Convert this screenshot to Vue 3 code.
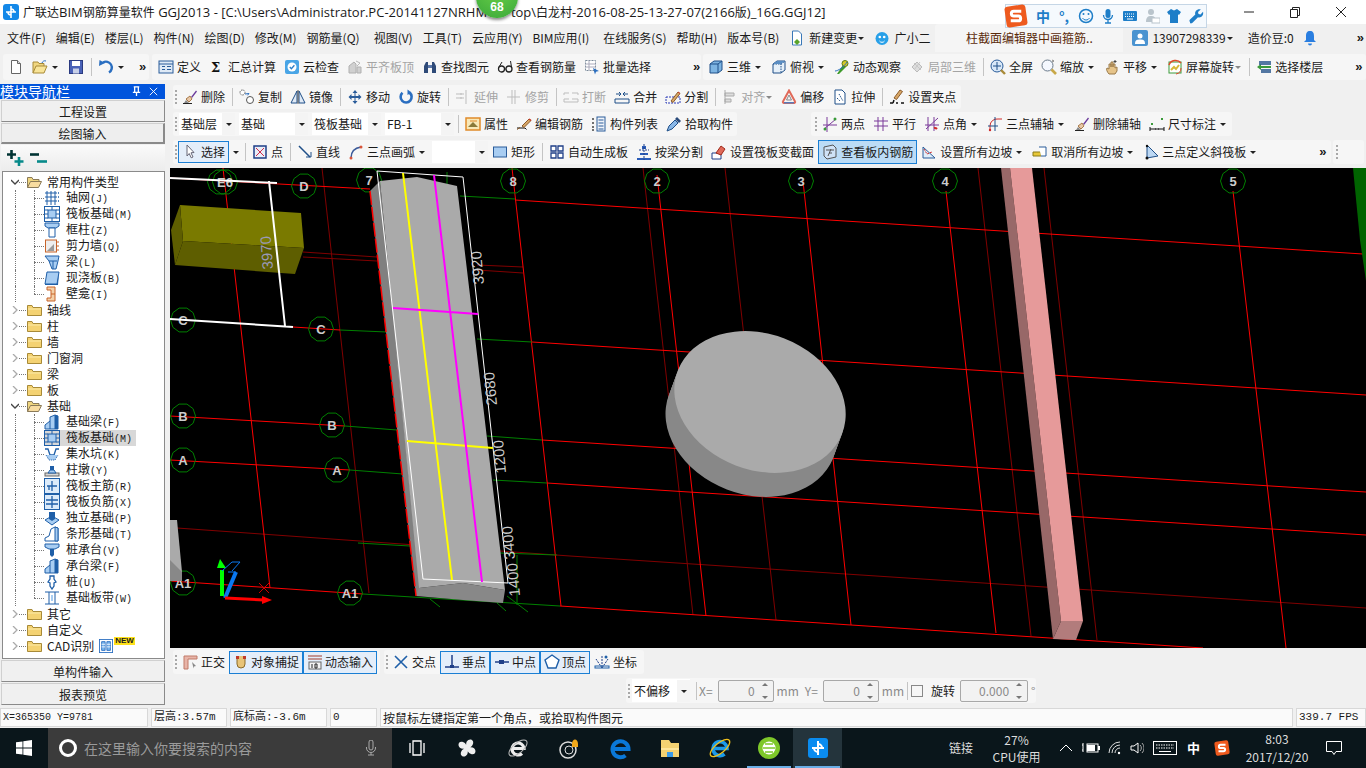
<template>
  <div class="app">
    <div class="titlebar">
      <svg class="logo" viewBox="0 0 16 16" v-html="icons.ggj"></svg>
      <span class="title-text"><span>广联达</span><span class="latin">BIM</span><span>钢筋算量软件</span><span class="latin"> GGJ2013 - [C:\Users\Administrator.PC-20141127NRHM\</span><span class="latin title-gap">top\</span><span>白龙村</span><span class="latin">-2016-08-25-13-27-07(2166</span><span>版</span><span class="latin">)_16G.GGJ12]</span></span>
      <div class="winctl">
        <svg viewBox="0 0 12 12"><path d="M1 6h10" stroke="#222" /></svg>
        <svg viewBox="0 0 12 12"><path d="M1.500 3.500h7v8h-7zM3.500 3.500v-2h7v8h-2" fill="none" stroke="#222" /></svg>
        <svg viewBox="0 0 12 12"><path d="M1 1l10 10M11 1L1 11" stroke="#222" /></svg>
      </div>
    </div>

    <div class="menubar">
      <span v-for="m in menus" :key="m" class="menu-item">{{ m }}</span>
      <svg class="icon mi-new" viewBox="0 0 16 16" v-html="icons.newchange"></svg>
      <span class="menu-label">新建变更</span><i class="caret mi-caret"></i>
      <svg class="icon mi-gxe" viewBox="0 0 16 16" v-html="icons.robot"></svg>
      <span class="menu-label mi-gxe-t">广小二</span>
      <div class="hint-tab">柱截面编辑器中画箍筋..</div>
      <svg class="icon mi-user" viewBox="0 0 16 16" v-html="icons.user"></svg>
      <span class="menu-label mi-phone">13907298339</span><i class="caret mi-caret"></i>
      <span class="menu-label mi-bean">造价豆:0</span>
      <svg class="icon mi-bell" viewBox="0 0 16 16" v-html="icons.bell"></svg>
      <span class="more mi-more">»</span>
    </div>

    <div class="toolrow toprow">
      <div v-for="(seg, si) in topRow" :key="si" class="seg" :class="seg.cls">
        <template v-for="(it, ii) in seg.items" :key="ii">
          <i v-if="it.k === 'sep'" class="sep"></i>
          <i v-else-if="it.k === 'grip'" class="grip"></i>
          <span v-else-if="it.k === 'more'" class="more">»</span>
          <div v-else class="tool" :class="{ off: it.off, box: it.box, plain: it.plain }">
            <svg class="icon" viewBox="0 0 16 16" v-html="icons[it.i]"></svg>
            <span v-if="it.label">{{ it.label }}</span>
            <i v-if="it.arrow" class="caret" :class="{ tiny: it.tiny }"></i>
          </div>
        </template>
      </div>
    </div>

    <div class="main">
      <aside class="nav">
        <div class="nav-head">
          <span>模块导航栏</span>
          <svg viewBox="0 0 12 12"><path d="M3 1h6M4 1v6M8 1v6M2 7h8M6 7v4" stroke="#fff" fill="none" stroke-width="1.400" /></svg>
          <svg viewBox="0 0 12 12"><path d="M2 2l8 8M10 2l-8 8" stroke="#fff" /></svg>
        </div>
        <div class="nav-btn">工程设置</div>
        <div class="nav-btn active">绘图输入</div>
        <div class="tree-tools">
          <svg viewBox="0 0 17 16"><path d="M4.500 0v9M0 4.500h9" stroke="#033" stroke-width="2.600" /><path d="M12 7v9M7.500 11.500h9" stroke="#078a8a" stroke-width="2.600" /></svg>
          <svg viewBox="0 0 17 16"><path d="M0 4.500h9" stroke="#033" stroke-width="2.600" /><path d="M7 11.500h10" stroke="#078a8a" stroke-width="2.600" /></svg>
        </div>
        <div class="tree">
          <div v-for="(r, i) in treeRows" :key="i" class="tree-row" :class="['lv' + r.l, { last: r.last }]">
            <template v-if="r.l === 0">
              <svg class="chev" viewBox="0 0 8 8">
                <path :d="r.open ? 'M0 2l4 4 4-4' : 'M2 0l4 4-4 4'" fill="none" :stroke="r.open ? '#444' : '#aaa'" stroke-width="1.300" />
              </svg>
              <i class="dots short"></i>
              <svg class="icon" viewBox="0 0 16 16" v-html="r.open ? icons.folderOpen : icons.folder"></svg>
              <span class="tree-label">{{ r.label }}<span v-if="r.code" class="code">{{ r.code }}</span></span>
              <template v-if="r.cad">
                <svg class="icon cad-icon" viewBox="0 0 16 16" v-html="icons.cad"></svg>
                <b class="new-tag">NEW</b>
              </template>
            </template>
            <template v-else>
              <i class="dots"></i>
              <span class="leaf" :class="{ picked: r.sel }">
                <svg class="icon" viewBox="0 0 16 16" v-html="icons[r.i]"></svg>
                <span class="tree-label">{{ r.label }}<span class="code">{{ r.code }}</span></span>
              </span>
            </template>
          </div>
        </div>
        <div class="nav-btn">单构件输入</div>
        <div class="nav-btn">报表预览</div>
      </aside>

      <section class="work">
        <div v-for="(row, ri) in workRows" :key="ri" class="toolrow" :class="'wr' + ri">
          <div v-for="(seg, si) in row" :key="si" class="seg" :class="seg.cls">
            <template v-for="(it, ii) in seg.items" :key="ii">
              <i v-if="it.k === 'sep'" class="sep"></i>
              <i v-else-if="it.k === 'grip'" class="grip"></i>
              <span v-else-if="it.k === 'more'" class="more">»</span>
              <div v-else-if="it.k === 'sel'" class="sel" :style="{ width: it.w + 'px' }">
                <span>{{ it.label }}</span><i class="caret"></i>
              </div>
              <div v-else class="tool" :class="{ off: it.off, box: it.box, hot: it.hot }">
                <svg class="icon" viewBox="0 0 16 16" v-html="icons[it.i]"></svg>
                <span>{{ it.label }}</span>
                <i v-if="it.arrow && !it.split" class="caret" :class="{ tiny: it.tiny }"></i>
              </div>
              <i v-if="it.split" class="caret solo"></i>
            </template>
          </div>
        </div>

        <svg class="canvas" viewBox="170 168 1196 480">
          <g stroke="#800000" fill="none">
            <path v-for="(d, i) in darkLines" :key="i" :d="d" />
          </g>
          <g stroke="#ff0000" fill="none">
            <path v-for="(d, i) in redLines" :key="i" :d="d" />
          </g>
          <g stroke="#008000" fill="none">
            <path v-for="(d, i) in greenLines" :key="i" :d="d" />
          </g>
          <g v-for="a in axes" :key="a.x + a.t + a.y">
            <path :d="octa(a.x, a.y)" fill="none" stroke="#008000" />
            <text class="ax" :x="a.x" :y="a.y + 5">{{ a.t }}</text>
          </g>

          <polygon points="180,205 301,213 304,248 183,241" fill="#7a7a00" />
          <polygon points="183,241 304,248 295,274 175,265" fill="#5e5e00" />
          <polygon points="180,205 183,241 175,265 171,230" fill="#5e5e00" />
          <path d="M170 178L277 183M269 181L285 326M170 319L293 327" stroke="#fff" stroke-width="2" fill="none" />
          <text class="dim faint" transform="translate(273,269) rotate(-94)">3970</text>

          <polygon points="170,520 177,520 182,572 170,581" fill="#aaa" />
          <polygon points="170,560 182,572 182,581 170,581" fill="#888" />

          <polygon points="370,191 380,181 420,590 416,596" fill="#808080" />
          <polygon points="419,588 463,583 505,590 503,603 463,600 416,596" fill="#888" />
          <polygon points="380,181 417,177 457,186 505,590 463,583 419,588" fill="#aaa" />
          <path d="M370 191L416 596" stroke="#f00" stroke-width="1.500" stroke-dasharray="14 2" fill="none" />
          <path d="M377 171L463 177L508 583L423 579Z" stroke="#fff" fill="none" />
          <path d="M403 173L452 580M407 441L493 448" stroke="#ff0" stroke-width="2" fill="none" />
          <path d="M434 175L482 582M393 308L478 314" stroke="#f0f" stroke-width="2" fill="none" />
          <text class="dim" transform="translate(484,284) rotate(-95)">3920</text>
          <text class="dim" transform="translate(497,405) rotate(-95)">2680</text>
          <text class="dim" transform="translate(506,473) rotate(-95)">1200</text>
          <text class="dim" transform="translate(515,559) rotate(-95)">3400</text>
          <text class="dim" transform="translate(520,596) rotate(-95)">1400</text>

          <ellipse v-for="s in 8" :key="s" :cx="760 - s * 1.1" :cy="402 + s * 3" rx="88" ry="68" fill="#888" :transform="'rotate(21 ' + (760 - s * 1.1) + ' ' + (402 + s * 3) + ')'" />
          <ellipse cx="760" cy="402" rx="88" ry="68" fill="#aaa" transform="rotate(21 760 402)" />

          <polygon points="1001,168 1010,168 1061,621 1053,639" fill="#986868" />
          <polygon points="1010,168 1032,168 1083,621 1061,621" fill="#e69a9a" />
          <polygon points="1061,621 1083,621 1076,640 1053,639" fill="#b27c7c" />
          <polygon points="1353,168 1366,168 1366,281 1360,240" fill="#006400" />

          <path d="M222 596L222 570" stroke="#0f0" stroke-width="4" />
          <polygon points="220,559 226,568 217,568" fill="#0f0" />
          <path d="M225 598L236 572" stroke="#0a78f0" stroke-width="4" />
          <path d="M222 571L232 562L240 562M232 571L240 562M228 572H236" stroke="#0a78f0" fill="none" />
          <path d="M225 598L264 600" stroke="#f00" stroke-width="3" />
          <polygon points="262,596 272,600 262,604" fill="#f00" />
          <path d="M259 583l10 10M269 583l-10 10" stroke="#c00" />
        </svg>

        <div class="toolrow snaprow">
          <div v-for="(seg, si) in snapRow" :key="si" class="seg" :class="seg.cls">
            <template v-for="(it, ii) in seg.items" :key="ii">
              <i v-if="it.k === 'grip'" class="grip"></i>
              <div v-else class="tool" :class="{ box: it.box }">
                <svg class="icon" viewBox="0 0 16 16" v-html="icons[it.i]"></svg>
                <span>{{ it.label }}</span>
              </div>
            </template>
          </div>
        </div>

        <div class="coordrow">
          <div class="seg coord-seg">
            <i class="grip"></i>
            <div class="sel coord-sel"><span>不偏移</span><i class="caret"></i></div>
            <i class="sep"></i>
            <span class="muted x-label">X=</span>
            <div class="spin"><span>0</span><i class="spin-btn"></i></div>
            <span class="muted">mm</span>
            <span class="muted y-label">Y=</span>
            <div class="spin"><span>0</span><i class="spin-btn"></i></div>
            <span class="muted">mm</span>
            <i class="sep"></i>
            <i class="check"></i>
            <span class="rot-label">旋转</span>
            <div class="spin wide"><span>0.000</span><i class="spin-btn"></i></div>
            <span class="muted">°</span>
          </div>
        </div>
      </section>
    </div>

    <div class="statusbar">
      <div class="cell c1">X=365350 Y=9781</div>
      <div class="cell c2">层高:3.57m</div>
      <div class="cell c3">底标高:-3.6m</div>
      <div class="cell c4">0</div>
      <div class="cell c5">按鼠标左键指定第一个角点，或拾取构件图元</div>
      <div class="cell c6">339.7 FPS</div>
    </div>

    <div class="taskbar">
      <div class="start">
        <svg viewBox="0 0 16 16"><path d="M0 2.300l6.500-.9v6.200H0zM7.300 1.300L16 0v7.600H7.300zM0 8.400h6.500v6.200L0 13.700zM7.300 8.400H16V16l-8.700-1.300z" fill="#fff" /></svg>
      </div>
      <div class="search">
        <i class="cortana"></i>
        <span class="search-text">在这里输入你要搜索的内容</span>
        <svg class="mic" viewBox="0 0 16 16"><path d="M6 2a2 2 0 014 0v6a2 2 0 01-4 0zM3.500 7v1a4.500 4.500 0 009 0V7M8 13v2M5 15h6" fill="none" stroke="#aaa" /></svg>
      </div>
      <div v-for="t in taskCells" :key="t.i" class="task" :class="{ running: t.run, focus: t.focus }" :style="{ width: t.w + 'px' }">
        <svg viewBox="0 0 24 24" v-html="icons[t.i]"></svg>
      </div>
      <div class="tray">
        <span class="t-link">链接</span>
        <div class="t-cpu"><span>27%</span><span>CPU使用</span></div>
        <svg class="t-up" viewBox="0 0 14 8"><path d="M1 7l6-6 6 6" fill="none" stroke="#fff" /></svg>
        <svg class="t-bat" viewBox="0 0 18 12"><path d="M1 3H0M1 8H0M1 1v9" stroke="#fff" /><rect x="5" y="2" width="11" height="8" fill="none" stroke="#fff" /><rect x="5" y="3" width="8" height="6" fill="#fff" /><rect x="16" y="4" width="2" height="4" fill="#fff" /></svg>
        <svg class="t-wifi" viewBox="0 0 14 14"><path d="M1 12a11 11 0 0111-11M4 12a8 8 0 018-8M7 12a5 5 0 015-5" fill="none" stroke="#ddd" /><circle cx="11" cy="12" r="1.200" fill="#fff" /></svg>
        <svg class="t-snd" viewBox="0 0 14 14"><path d="M1 5h3l4-3v10l-4-3H1z" fill="none" stroke="#fff" /><path d="M10 4a4 4 0 010 6M12 2a7 7 0 010 10" fill="none" stroke="#aaa" /></svg>
        <svg class="t-kbd" viewBox="0 0 24 14"><rect x=".5" y=".5" width="23" height="13" fill="none" stroke="#fff" /><path d="M3 4h18M3 7h18" stroke="#fff" stroke-dasharray="1.500 1" /><path d="M6 10.500h12" stroke="#fff" /></svg>
        <span class="t-zh">中</span>
        <svg class="t-s" viewBox="0 0 16 16" v-html="icons.sogou"></svg>
        <div class="t-clock"><span>8:03</span><span>2017/12/20</span></div>
        <svg class="t-note" viewBox="0 0 16 14"><path d="M.5.500h15v10h-5.500l-2 3-2-3H.5z" fill="none" stroke="#fff" /></svg>
      </div>
    </div>

    <div class="badge"><span>68</span></div>

    <div class="sogou">
      <svg class="sg-logo" viewBox="0 0 16 16" v-html="icons.sogou"></svg>
      <span class="sg-zh">中</span>
      <span class="sg-dot">°,</span>
      <svg viewBox="0 0 16 16"><circle cx="8" cy="8" r="6.500" fill="none" stroke="#1e7ec8" stroke-width="1.500" /><circle cx="5.500" cy="6" r="1" fill="#1e7ec8" /><circle cx="10.500" cy="6" r="1" fill="#1e7ec8" /><path d="M4.500 10a4 4 0 007 0" fill="none" stroke="#1e7ec8" /></svg>
      <svg viewBox="0 0 16 16"><rect x="5.500" y="1" width="5" height="9" rx="2.500" fill="#1e7ec8" /><path d="M3.500 7a4.500 4.500 0 009 0M8 12v3M5 15h6" fill="none" stroke="#1e7ec8" stroke-width="1.300" /></svg>
      <svg viewBox="0 0 16 16"><rect x="1" y="3" width="14" height="10" rx="1" fill="#1e7ec8" /><path d="M3 6h10M3 8.500h10" stroke="#fff" stroke-dasharray="1 1" /><path d="M5 11h6" stroke="#fff" /></svg>
      <svg viewBox="0 0 16 16"><circle cx="7" cy="4" r="3" fill="#b9c4cc" /><path d="M2 14c0-5 2-6 5-6s5 1 5 6z" fill="#b9c4cc" /><rect x="8" y="10" width="8" height="5" fill="#fff" stroke="#b9c4cc" /></svg>
      <svg viewBox="0 0 16 16"><path d="M5 1l3 1.500L11 1l4 3-2 3-1-.7V15H4V6.300L3 7 1 4z" fill="#1e7ec8" /></svg>
      <svg viewBox="0 0 16 16"><path d="M2 14c-1-1-.5-2 .3-2.700l5-4.800c-1-3 2-6 5.500-5L10 4l.5 2 2 .5 2.500-2.700c1 3.500-2 6.500-5 5.500l-5 5c-.8.800-2 1.600-3 .7z" fill="#1e7ec8" /></svg>
    </div>
  </div>
</template>

<script setup>
const sep = { k: 'sep' }
const grip = { k: 'grip' }
const more = { k: 'more' }
const t = (i, label, opts = {}) => ({ i, label, ...opts })
const off = { off: true }
const arrow = { arrow: true }

const menus = ['文件(F)', '编辑(E)', '楼层(L)', '构件(N)', '绘图(D)', '修改(M)', '钢筋量(Q)', '视图(V)', '工具(T)', '云应用(Y)', 'BIM应用(I)', '在线服务(S)', '帮助(H)', '版本号(B)']

const topRow = [
  { cls: 's-file', items: [t('new', ''), t('open', '', arrow), t('save', ''), sep, t('undo', '', arrow), more] },
  {
    cls: 's-main',
    items: [t('define', '定义'), t('sigma', '汇总计算'), t('cloud', '云检查'), t('flush', '平齐板顶', off), t('binoc', '查找图元'), t('glasses', '查看钢筋量'), t('batch', '批量选择'), more]
  },
  {
    cls: 's-view',
    items: [
      t('cube', '三维', arrow), t('topview', '俯视', arrow), t('orbit', '动态观察'), t('local3d', '局部三维', off), sep,
      t('fit', '全屏'), t('zoom', '缩放', arrow), t('pan', '平移', arrow), t('rotview', '屏幕旋转', { arrow: true, tiny: true }), sep, t('floors', '选择楼层'), more
    ]
  }
]

const workRows = [
  [
    {
      cls: 's-a',
      items: [
        grip, t('brush', '删除'), sep, t('copy', '复制'), t('mirror', '镜像'), sep, t('move', '移动'), t('rotate', '旋转'), sep,
        t('extend', '延伸', off), t('trim', '修剪', off), sep, t('breakg', '打断', off), t('merge', '合并'), t('split', '分割'), sep,
        t('align', '对齐', { off: true, arrow: true, tiny: true }), t('offset', '偏移'), t('stretch', '拉伸'), sep, t('grippt', '设置夹点')
      ]
    }
  ],
  [
    {
      cls: 's-b',
      items: [
        grip, { k: 'sel', label: '基础层', w: 56 }, { k: 'sel', label: '基础', w: 69 }, { k: 'sel', label: '筏板基础', w: 69 }, { k: 'sel', label: 'FB-1', w: 69 }, sep,
        t('props', '属性'), t('editbar', '编辑钢筋'), t('list', '构件列表'), t('pick', '拾取构件')
      ]
    },
    {
      cls: 's-b2',
      items: [grip, t('twopt', '两点'), t('parallel', '平行'), t('angle', '点角', arrow), t('arc3', '三点辅轴', arrow), t('brush', '删除辅轴'), t('dimen', '尺寸标注', arrow)]
    }
  ],
  [
    {
      cls: 's-c',
      items: [
        grip, t('cursor', '选择', { box: true, arrow: true, split: true }), sep, t('point', '点'), sep, t('line', '直线'), t('arc', '三点画弧', arrow),
        { k: 'sel', label: '', w: 56 }, t('rect', '矩形'), sep, t('autogen', '自动生成板'), t('beamsplit', '按梁分割'), t('varsec', '设置筏板变截面'),
        t('viewbar', '查看板内钢筋', { hot: true }), t('slope', '设置所有边坡', arrow), t('noslope', '取消所有边坡', arrow), t('tilt', '三点定义斜筏板', arrow), more
      ]
    },
    { cls: 's-c2', items: [grip] }
  ]
]

const snapRow = [
  {
    cls: 's-snap1',
    items: [grip, t('ortho', '正交'), t('osnap', '对象捕捉', { box: true }), t('dyn', '动态输入', { box: true })]
  },
  {
    cls: 's-snap2',
    items: [grip, t('cross', '交点'), t('perp', '垂点', { box: true }), t('mid', '中点', { box: true }), t('vert', '顶点', { box: true }), t('ucs', '坐标')]
  }
]

const f = (label, extra = {}) => ({ l: 0, label, ...extra })
const c = (i, label, code, extra = {}) => ({ l: 1, i, label, code, ...extra })
const treeRows = [
  f('常用构件类型', { open: true }),
  c('grid', '轴网', '(J)'),
  c('raft', '筏板基础', '(M)'),
  c('column', '框柱', '(Z)'),
  c('shear', '剪力墙', '(Q)'),
  c('beam', '梁', '(L)'),
  c('slab', '现浇板', '(B)'),
  c('niche', '壁龛', '(I)', { last: true }),
  f('轴线'), f('柱'), f('墙'), f('门窗洞'), f('梁'), f('板'),
  f('基础', { open: true }),
  c('fbeam', '基础梁', '(F)'),
  c('raft', '筏板基础', '(M)', { sel: true }),
  c('pit', '集水坑', '(K)'),
  c('pier', '柱墩', '(Y)'),
  c('mainbar', '筏板主筋', '(R)'),
  c('negbar', '筏板负筋', '(X)'),
  c('isolated', '独立基础', '(P)'),
  c('fstrip', '条形基础', '(T)'),
  c('pilecap', '桩承台', '(V)'),
  c('fbeam', '承台梁', '(F)'),
  c('pile', '桩', '(U)'),
  c('band', '基础板带', '(W)', { last: true }),
  f('其它'), f('自定义'), f('CAD识别', { cad: true })
]

const redLines = [
  'M515 200L1363 254', 'M532 342L1366 395', 'M542 440L1366 492', 'M547 483L1366 535', 'M560 606L1203 648',
  'M170 178L370 189', 'M293 327L340 330', 'M170 416L345 426', 'M170 460L350 470', 'M170 581L363 594',
  'M657 175L706 616', 'M803 181L851 625', 'M946 191L996 633', 'M1233 191L1286 648',
  'M512 168L561 606', 'M223 168L270 588'
]
const darkLines = [
  'M177 528L570 556L1366 608', 'M643 168L693 615', 'M725 168L776 620', 'M978 168L1031 636', 'M1044 168L1097 640',
  'M322 168L369 593', 'M303 252L377 257', 'M303 257L377 261', 'M477 265L523 267', 'M477 270L523 273'
]
const greenLines = [
  'M460 196L515 199', 'M477 339L532 342', 'M340 330L387 332', 'M487 436L542 440', 'M493 480L547 483', 'M345 426L397 430', 'M350 470L403 474',
  'M358 543L410 546', 'M500 553L557 555', 'M363 594L560 606', 'M430 599L440 607', 'M497 603L506 611', 'M507 596L528 612', 'M517 555V605', 'M447 172V184'
]
const axes = [
  { x: 220, y: 182, t: '' }, { x: 225, y: 182, t: 'E6' }, { x: 304, y: 186, t: 'D' }, { x: 369, y: 180, t: '7' }, { x: 513, y: 181, t: '8' },
  { x: 183, y: 320, t: 'C' }, { x: 321, y: 329, t: 'C' }, { x: 183, y: 416, t: 'B' }, { x: 332, y: 425, t: 'B' },
  { x: 183, y: 460, t: 'A' }, { x: 337, y: 470, t: 'A' }, { x: 183, y: 583, t: 'A1' }, { x: 350, y: 593, t: 'A1' },
  { x: 657, y: 181, t: '2' }, { x: 801, y: 181, t: '3' }, { x: 945, y: 181, t: '4' }, { x: 1233, y: 181, t: '5' }
]
function octa(x, y) {
  const pts = []
  for (let i = 0; i < 10; i++) {
    const a = (Math.PI * 2 * i) / 10
    pts.push((x + Math.cos(a) * 12.5).toFixed(1) + ' ' + (y + Math.sin(a) * 12.5).toFixed(1))
  }
  return 'M' + pts.join('L') + 'Z'
}

const taskCells = [
  { i: 'taskview', w: 49 }, { i: 'fan', w: 51 }, { i: 'ieWhite', w: 52 }, { i: 'swirl', w: 52 }, { i: 'edge', w: 50 },
  { i: 'explorer', w: 48 }, { i: 'ie', w: 51 }, { i: 'greenE', w: 48, run: true }, { i: 'ggjBig', w: 49, run: true, focus: true }
]

const B = '#1f5fa8'
const L = '#a8cdf2'
const O = '#c8642a'
const icons = {
  ggj: `<rect width="16" height="16" rx="3" fill="#1388e8"/><path d="M8 2v12M3 8h10M8 5a3 3 0 013 3M8 11a3 3 0 01-3-3" fill="none" stroke="#fff" stroke-width="1.600"/>`,
  ggjBig: `<rect x="2" y="2" width="20" height="20" rx="3" fill="#0a8cf0"/><path d="M12 5v14M6 12h12M12 8a4 4 0 014 4M12 16a4 4 0 01-4-4" fill="none" stroke="#fff" stroke-width="2"/>`,
  sogou: `<rect x="1" y="1" width="14" height="14" rx="2" fill="#ee5a1e" transform="rotate(-8 8 8)"/><path d="M11.500 4.800H6.500a1.500 1.500 0 000 3.200h3a1.500 1.500 0 010 3.200H4.500" fill="none" stroke="#fff" stroke-width="2"/>`,
  newchange: `<path d="M3.500 1h6l3 3v11h-9z" fill="#fff" stroke="#3a78b8"/><path d="M8 9l3 3-3 3-3-3z" fill="#5aa32a"/>`,
  robot: `<ellipse cx="8" cy="8.500" rx="6.500" ry="6.500" fill="#28a0e8"/><circle cx="5.800" cy="7" r="1.300" fill="#fff"/><circle cx="10.200" cy="7" r="1.300" fill="#fff"/><path d="M5.500 11a3 3 0 005 0" stroke="#fff" fill="none"/>`,
  user: `<rect width="16" height="16" rx="2" fill="#4a93d0"/><circle cx="8" cy="6" r="2.500" fill="#fff"/><path d="M3 14c0-4 2-4.500 5-4.500s5 .5 5 4.500z" fill="#fff"/>`,
  bell: `<path d="M8 1c3 0 4 2 4 5v4l2 2H2l2-2V6c0-3 1-5 4-5z" fill="#2a7ee0"/><path d="M6 13.500a2 2 0 004 0z" fill="#2a7ee0"/>`,
  new: `<path d="M3.500 1.500h6l3 3v10h-9z" fill="#fff" stroke="#666"/><path d="M9.500 1.500v3h3" fill="#ddd" stroke="#666"/>`,
  open: `<path d="M1 14V3h5l1 1.500h5V7" fill="#f0d680" stroke="#a88a38"/><path d="M1 14l3-7h11l-3 7z" fill="#f8e498" stroke="#a88a38"/><path d="M10 4a3 3 0 014-2" fill="none" stroke="#2a6ec0"/>`,
  save: `<rect x="1.500" y="1.500" width="13" height="13" fill="#4a62b8" stroke="#2a3a80"/><rect x="4" y="2" width="8" height="5" fill="#fff"/><rect x="5" y="9.500" width="6" height="5" fill="#c8d0e8"/>`,
  undo: `<path d="M5 3.500a5 5 0 116 10" fill="none" stroke="#2a6ec0" stroke-width="2.400"/><path d="M1 7l.5-6 5.500 3z" fill="#2a6ec0"/>`,
  define: `<rect x="1" y="2" width="14" height="12" fill="#dfeaf6" stroke="#2a5c9a"/><path d="M1 5h14M4 7.500h3M4 10.500h3M9 7.500h4M9 10.500h4" stroke="#2a5c9a"/>`,
  sigma: `<text x="2" y="13" font-size="13" font-weight="700" font-family="DejaVu Serif" fill="#111">Σ</text>`,
  cloud: `<rect x="1" y="1" width="14" height="14" rx="2" fill="#49a5e6"/><circle cx="8" cy="8" r="4.500" fill="#fff"/><path d="M5.800 8l1.600 1.700 3-3.400" fill="none" stroke="#2a7ec8" stroke-width="1.300"/>`,
  flush: `<path d="M2 14V7l5-4 2 2v9zM10 14V8h4v6z" fill="#d0d0d0" stroke="#b0b0b0"/><path d="M9 2l4 2-3 3" fill="none" stroke="#bbb"/>`,
  binoc: `<path d="M2 14V7l2-4h2v11zM14 14V7l-2-4h-2v11z" fill="#2e4a78"/><rect x="6" y="6" width="4" height="3" fill="#5a76a8"/>`,
  glasses: `<circle cx="4.500" cy="10" r="3" fill="none" stroke="#222" stroke-width="1.300"/><circle cx="12" cy="10" r="3" fill="none" stroke="#222" stroke-width="1.300"/><path d="M7.500 10h1.500M2 8l3-5M14.500 8l-1-6" stroke="#222" fill="none"/>`,
  batch: `<rect x="1.500" y="1.500" width="10" height="10" fill="#fff" stroke="#7a8a9a" stroke-dasharray="2 1"/><path d="M1.500 5h10M1.500 8h10M5 1.500v10" stroke="#aab"/><path d="M9 9l6 3-3 .8-1 2.700z" fill="#2a6ec0"/>`,
  cube: `<path d="M2 5l4-3h8v9l-4 3H2z" fill="#7db4e2" stroke="#1f4f88"/><path d="M2 5h8v9M10 5l4-3" fill="none" stroke="#1f4f88"/>`,
  topview: `<path d="M2 5l4-3h8v9l-4 3H2z" fill="#e6f0f9" stroke="#1f4f88"/><path d="M2 5h8v9M10 5l4-3" fill="none" stroke="#1f4f88" stroke-dasharray="1.500 1"/><path d="M2 5l4-3h8l-4 3z" fill="#5a8ec4"/>`,
  orbit: `<path d="M3 15l6-9 3 2-7 7z" fill="#3e9a2a"/><circle cx="11" cy="4.500" r="3" fill="#d8c828" stroke="#5a7a18"/><path d="M1 12c3 0 9-4 12-9" stroke="#2a6ec0" fill="none"/>`,
  local3d: `<path d="M3 8l5-5 5 5-5 5z" fill="#ddd" stroke="#bbb"/><path d="M5 4l7 7M11 3l-6 8" stroke="#c8c8c8"/>`,
  fit: `<circle cx="7" cy="7" r="6" fill="#d8e8f8" stroke="#2a5c9a"/><path d="M7 3v8M3 7h8" stroke="#1f4f88"/><path d="M11 11l4 4" stroke="#a88a38" stroke-width="2.400"/>`,
  zoom: `<circle cx="6.500" cy="6.500" r="5.500" fill="#f4f8ff" stroke="#6a7a8a"/><path d="M10.500 10.500l4.500 4.500" stroke="#c8a848" stroke-width="2.600"/><path d="M11 1l2 1-2 1" fill="none" stroke="#888"/>`,
  pan: `<path d="M5 15c-2-2-3-5-2-6l2 1V5h2v3V3h2v5-3h2v4l2-1v4l-2 3z" fill="#e6c48a" stroke="#9a7a4a"/><path d="M11 1v3M9.500 2.500h3" stroke="#444"/>`,
  rotview: `<rect x="2" y="3" width="12" height="11" fill="#fff" stroke="#3a9a3a"/><path d="M4 11l3-3 2 2 3-4" fill="none" stroke="#d8b838" stroke-width="2"/><path d="M2 6a7 7 0 0112-2" fill="none" stroke="#e04a2a" stroke-width="1.500"/><path d="M14 9a6 6 0 01-5 6" fill="none" stroke="#e04a2a"/>`,
  floors: `<path d="M1 8l4-3v2h10v2H5v2z" fill="#3a9a3a"/><path d="M3 3h12M3 5h12M5 11h10M5 13h10" stroke="#1f4f88" stroke-width="1.300"/>`,
  brush: `<path d="M9 8l5-6.500 1 1L10 9z" fill="#6a3a9a"/><path d="M4 10l4-3 2 3-3 3z" fill="#e8c8a8" stroke="#a87a4a"/><path d="M1 14.500h9" stroke="#222"/><path d="M4 11l-2 3h5z" fill="#888"/>`,
  copy: `<circle cx="3.500" cy="3.500" r="2.500" fill="#fff" stroke="#555" stroke-dasharray="1.500 1"/><circle cx="11" cy="11" r="3.500" fill="#fff" stroke="#555"/><path d="M6 5l4-.5M10 4.500l-1.500 1.800" stroke="#2a6ec0" fill="none"/>`,
  mirror: `<path d="M7 2L1 14h6zM9 2l6 12H9z" fill="#e0eaf6" stroke="#1f4f88"/><path d="M8 1v14" stroke="#555"/>`,
  move: `<path d="M8 1l2.500 3h-2v3h3V5l3 3-3 3V9h-3v3h2L8 15l-2.500-3h2V9h-3v2l-3-3 3-3v2h3V4h-2z" fill="#2a5c9a"/>`,
  rotate: `<path d="M4.500 3.800a5.500 5.500 0 107-.2" fill="none" stroke="#2a6ec0" stroke-width="2.600"/><path d="M9.500 6V.500l4 3z" fill="#2a6ec0"/>`,
  extend: `<path d="M1 5h8M1 9h8M11 1v14M5 5h2M5 9h2" stroke="#bdbdbd" fill="none"/>`,
  trim: `<path d="M1 8h13M6 1v14M9 1v14" stroke="#bdbdbd" fill="none"/>`,
  breakg: `<path d="M1 4h5M9 4h6M1 10h5M9 10h6M1 4v2M15 4v2M1 10v3M15 10v3h-14" stroke="#bdbdbd" fill="none"/>`,
  merge: `<path d="M1 10h14v4H1z" fill="none" stroke="#1f4f88"/><path d="M2 5h5M14 5H9M5 3l2 2-2 2M11 3L9 5l2 2" stroke="#1f4f88" fill="none"/>`,
  split: `<path d="M1 8h14v6H1z" fill="none" stroke="#2a3ab8" stroke-dasharray="2 1"/><path d="M6 12l7-9 2 1.500-7 9z" fill="#d8a868" stroke="#8a5a2a"/><path d="M13 3l2 1.500" stroke="#d03a2a"/>`,
  align: `<path d="M3 1v14M3 4h9v3H3zM3 10h6v3H3z" fill="#ddd" stroke="#aaa"/>`,
  offset: `<path d="M8 1.500l6 11a1 1 0 01-1 1.500H3a1 1 0 01-1-1.500z" fill="none" stroke="#e06a5a" stroke-width="2"/><path d="M8 6l2.500 5h-5z" fill="none" stroke="#888"/><rect x="3" y="13" width="10" height="1.500" fill="#5a7ab8"/>`,
  stretch: `<path d="M3 1h7l3 3v11H3z" fill="#fff" stroke="#1f4f88"/><path d="M5 9l3 3M7 5l4 7" stroke="#1f4f88" stroke-dasharray="1.500 1"/>`,
  grippt: `<path d="M5 9l6-8 2.500 1.500-6 8z" fill="#d8a868" stroke="#8a5a2a"/><path d="M1 14h3M7 14h2M12 14h3M5 11l-1 3" stroke="#111" stroke-width="1.500"/>`,
  props: `<rect x="1" y="2" width="14" height="12" fill="#f8e8b8" stroke="#e08a2a" stroke-width="1.500"/><path d="M3 11l5-5 5 5z" fill="#8a7a3a"/><path d="M5 5h7" stroke="#e08a2a"/>`,
  editbar: `<path d="M1 12h8l1.500 1.500" stroke="#111" fill="none"/><path d="M1 13.500l3-2M6 10l7-7 2 1.500-7 7z" fill="#d8a868" stroke="#8a5a2a"/><path d="M13 3l2 1.500" stroke="#d03a2a" stroke-width="1.500"/>`,
  list: `<rect x="6" y="1" width="8" height="14" fill="#f0f4fa" stroke="#2a5c9a"/><path d="M7.500 4h5M7.500 7h5M7.500 10h5M7.500 13h5" stroke="#2a5c9a"/><path d="M1 3h2M1 7h2M1 11h2M1 14h2" stroke="#444" stroke-width="1.500"/>`,
  pick: `<path d="M1 15l2-5 6-6 3 3-6 6z" fill="#8ab8e8" stroke="#1f4f88"/><path d="M9 3l2-2 4 4-2 2z" fill="#2a4a7a"/>`,
  twopt: `<path d="M2 13L14 3M5 1v15M1 9h14" stroke="#7a3a9a" fill="none"/><circle cx="3" cy="13" r="1.500" fill="#3a9a3a"/><circle cx="13" cy="3" r="1.500" fill="#3a9a3a"/>`,
  parallel: `<path d="M1 5h14M1 10h14M5 1v14M10 1v14" stroke="#7a3a9a" fill="none"/>`,
  angle: `<path d="M2 13L14 2M4 1v14M10 1v14M1 9h14" stroke="#7a3a9a" fill="none"/><path d="M10 12a3 3 0 013 1" stroke="#d02a2a" stroke-width="2" fill="none"/>`,
  arc3: `<path d="M3 15V10a7 7 0 018-7h4" stroke="#d02a2a" fill="none"/><path d="M8 1v14M1 10h10" stroke="#1f4f88" fill="none"/><circle cx="3" cy="14" r="1.200" fill="#d02a2a"/>`,
  dimen: `<path d="M1 13h14M1 11v4M15 11v4" stroke="#111" fill="none"/><rect x="2" y="7" width="2" height="2" fill="#3a9a3a"/><rect x="12" y="2" width="2" height="2" fill="#3a9a3a"/><path d="M6 13h1M9 13h1" stroke="#111"/>`,
  cursor: `<path d="M5 1l7 7.500-3 .3 2 4.200-1.800.8-2-4.300L5 12z" fill="#fff" stroke="#667"/>`,
  point: `<rect x="2" y="2" width="12" height="12" fill="#e8eef8" stroke="#1f3f88" stroke-width="1.500"/><path d="M4 4l8 8M12 4l-8 8" stroke="#d02a4a"/>`,
  line: `<path d="M2 2l11 11" stroke="#1f4f88" stroke-width="1.500"/><path d="M9 13h5V8" fill="none" stroke="#1f4f88"/>`,
  arc: `<path d="M3 14C3 8 6 4 13 3" fill="none" stroke="#3a5a9a" stroke-width="1.500"/><circle cx="3" cy="14" r="1.500" fill="#d8553a"/><circle cx="13" cy="3" r="1.500" fill="#d8553a"/>`,
  rect: `<rect x="1.500" y="3" width="13" height="10" fill="#a8cdf2" stroke="#2a5c9a"/>`,
  autogen: `<path d="M2 2h5v5H2zM9 2h5v5H9zM2 9h5v5H2zM9 9h5v5H9z" fill="#fff" stroke="#1f3f88" stroke-width="1.300"/>`,
  beamsplit: `<path d="M1 14h14v2H1zM4 9h8v2H4zM6 2h4v3H6z" fill="#2a5cb8"/><path d="M8 0v16M3 6h10" stroke="#1f3f88" stroke-dasharray="2 1"/>`,
  varsec: `<path d="M1 9h9v6H1z" fill="#fff" stroke="#1f3f88"/><path d="M5 9l5-7 4 3-4 6z" fill="#e06a5a" stroke="#a02a1a"/>`,
  viewbar: `<path d="M2 3l9-2 3 3v9l-9 2-3-3z" fill="#cfe2f6" stroke="#555"/><path d="M4 6h8M9 5L6 12M7 9h3" stroke="#555" fill="none"/>`,
  slope: `<path d="M2 14V3l12 11z" fill="#e0eefa" stroke="#2a5c9a"/><path d="M3 5l3 5 5-2" fill="none" stroke="#d02a2a" stroke-dasharray="2 1"/>`,
  noslope: `<path d="M1 8h8v4H1z" fill="#e8c838" stroke="#8a7a18"/><path d="M7 3h7v9H9" fill="#fff" stroke="#2a5c9a"/>`,
  tilt: `<path d="M4 1v13l11-2z" fill="#bcd8f4" stroke="#1f4f88"/><circle cx="4" cy="14" r="1.500" fill="#111"/><circle cx="4" cy="2" r="1.200" fill="#111"/>`,
  ortho: `<path d="M2 2h13v3H6v10H2z" fill="#e8b4a8" stroke="#c07a68"/><path d="M10 8l4 4-2 .4-.4 2z" fill="#888"/>`,
  osnap: `<path d="M4 2v8a4 4 0 008 0V2" fill="#e8c478" stroke="#8a6a2a"/><path d="M3 2h3v3H3zM10 2h3v3h-3z" fill="#c03a2a"/>`,
  dyn: `<path d="M1 2h14M1 5h14" stroke="#a03a2a"/><rect x="2" y="8" width="12" height="7" fill="#f4f4f4" stroke="#666"/><path d="M5 10v4M8 10v4h2v-4z" stroke="#222" fill="none"/>`,
  cross: `<path d="M2 2l12 12M14 2L2 14" stroke="#1f5fa8" stroke-width="1.600"/>`,
  perp: `<path d="M1 13h14M8 1v10" stroke="#1f3f88" stroke-width="1.500"/><rect x="6" y="11" width="4" height="3" fill="#1f3f88"/>`,
  mid: `<path d="M1 8h14" stroke="#1f3f88" stroke-width="1.500"/><rect x="5" y="6" width="5" height="4" fill="#1f3f88"/>`,
  vert: `<path d="M8 1l7 5-3 8H4L1 6z" fill="#fff" stroke="#1f5fa8" stroke-width="1.400"/>`,
  ucs: `<path d="M8 2v12M8 14L2 5M8 14l6-9" stroke="#1f3f88" stroke-dasharray="2 1" fill="none"/><rect x="1" y="12" width="14" height="2" fill="none" stroke="#1f5fa8"/><circle cx="12" cy="3" r="1.500" fill="#1f5fa8"/>`,
  folder: `<path d="M1.500 13.500V3.500h4.500l1 2h8.500v8z" fill="#f4d272" stroke="#a88a38"/><path d="M2 7h13" stroke="#fbeaa8"/>`,
  folderOpen: `<path d="M1.500 13.500V3.500h4.500l1 2h6v2" fill="#f0d680" stroke="#8a7a58"/><path d="M1.500 13.500l3-6h11l-3 6z" fill="#f8dca0" stroke="#8a7a58"/>`,
  cad: `<rect x=".5" y=".5" width="15" height="15" fill="#fff" stroke="#2a6ec0"/><path d="M3 3h4v10H3zM9 3h4v10H9z" fill="#7ab4ec" stroke="#2a6ec0"/><path d="M3 6h4M3 9h4M9 6h4M9 9h4" stroke="#fff"/>`,
  grid: `<path d="M1 3h12M1 7h12M1 11h12M3 1v14M7 1v14M11 1v14" stroke="${B}" fill="none"/><path d="M14 3h1M14 7h1M14 11h1" stroke="${B}" stroke-width="1.500"/>`,
  raft: `<rect x=".5" y=".5" width="15" height="15" fill="none" stroke="${B}"/><rect x="4" y="4" width="8" height="8" fill="${L}" stroke="${B}"/><path d="M1 4h3M1 8h3M1 12h3M12 4h3M12 8h3M12 12h3M8 1v3M8 12v3" stroke="${B}"/>`,
  column: `<path d="M1 1h14v3l-3 2H4L1 4z" fill="${L}" stroke="${B}"/><path d="M5 6h6v9H5z" fill="#fff" stroke="${B}"/>`,
  shear: `<rect x="1.500" y="2" width="11" height="12" fill="#eee" stroke="${O}"/><path d="M3 13l7-7v7z" fill="#999"/><path d="M13 4h2M13 8h2M13 12h2" stroke="${O}"/>`,
  beam: `<path d="M1 2h14l-1 5-2 8H8L5 7z" fill="${L}" stroke="${B}"/><path d="M5 7h8M9 7v8" stroke="${B}"/>`,
  slab: `<path d="M3 2h12l-2 12H1z" fill="${L}" stroke="${B}"/><path d="M1 14h12l2-12-1 13H1z" fill="${B}"/>`,
  niche: `<path d="M3 1h8v14H3v-3h4V4H3z" fill="#f4d0a8" stroke="${O}"/><path d="M7 8h4" stroke="${O}"/>`,
  fbeam: `<path d="M1 15V11l5-4V3l5-2 3 1v13z" fill="${L}" stroke="${B}"/><path d="M6 7v8M11 1v14" stroke="${B}"/><path d="M11 1l3 1v13h-3z" fill="${B}"/>`,
  pit: `<path d="M1 3h3l2 6h4l2-6h3" fill="none" stroke="${B}" stroke-width="1.300"/><path d="M2 9l3 5h6l3-5" fill="${L}" stroke="${B}" stroke-dasharray="1 1"/>`,
  pier: `<rect x="1" y="11" width="14" height="3" fill="#d8d8d8" stroke="#666"/><path d="M4 11l2-3h4l2 3z" fill="${L}" stroke="${B}"/><rect x="6" y="4" width="4" height="4" fill="${B}"/>`,
  mainbar: `<rect x=".5" y=".5" width="15" height="15" fill="#dcebfa" stroke="${B}"/><path d="M8 3v10M3 8h10M5 8v4" stroke="${B}" stroke-width="1.300" fill="none"/>`,
  negbar: `<rect x=".5" y=".5" width="15" height="15" fill="#dcebfa" stroke="${B}"/><path d="M2 6h12M2 10h12M8 2v12" stroke="${B}" stroke-width="1.300"/>`,
  isolated: `<path d="M1 10l7-4 7 4-7 5z" fill="${L}" stroke="${B}"/><path d="M5 2h6v7l-3 2-3-2z" fill="${B}"/>`,
  fstrip: `<path d="M1 15V12l4-2 2-7 4-2 3 1v13z" fill="#fff" stroke="${B}"/><path d="M11 1l3 1v13h-3z" fill="${L}" stroke="${B}"/>`,
  pilecap: `<path d="M1 2h14v3l-4 2H5L1 5z" fill="${L}" stroke="${B}"/><path d="M6 7h4v6l-2 2-2-2z" fill="${B}"/>`,
  pile: `<path d="M6 2h4v3l2 3-2 1v3l-2 3-2-3V9L4 8l2-3z" fill="#fff" stroke="${B}" stroke-width="1.300"/>`,
  band: `<path d="M1 2h14M1 14h14M5 2v12M11 2v12" stroke="${B}" fill="none"/><path d="M7 5h2v6H7z" fill="${L}"/>`,
  taskview: `<path d="M8 5h8v14H8zM5 7v10M19 7v10" fill="none" stroke="#fff" stroke-width="1.300"/>`,
  fan: `<path d="M12 12C8 2 20 1 18 8c-1 3-4 4-6 4zM12 12c10 -4 11 8 4 6-3-1-4-4-4-6zM12 12c4 10-8 11-6 4 1-3 4-4 6-4zM12 12C2 16 1 4 8 6c3 1 4 4 4 6z" fill="#eee"/>`,
  ieWhite: `<path d="M6 12.500h12a6 6 0 10-2 5" fill="none" stroke="#eee" stroke-width="3.200"/><ellipse cx="12" cy="12" rx="11" ry="5" fill="none" stroke="#bbb" transform="rotate(-40 12 12)"/>`,
  swirl: `<circle cx="10" cy="14" r="8" fill="none" stroke="#ddd" stroke-width="1.500"/><circle cx="11" cy="14" r="4" fill="none" stroke="#ddd"/><path d="M14 8c0-6 6-6 6 0v3h2H12h2z" fill="#f2a91c"/>`,
  edge: `<path d="M4 13h15.500a8 8 0 10-3 6.500" fill="none" stroke="#0a78d8" stroke-width="4"/>`,
  explorer: `<path d="M3 4h8l2 3h8v14H3z" fill="#f4d272"/><path d="M9 16h6v5H9z" fill="#3a9ae8"/><path d="M3 12h18v2H3z" fill="#ffe69a"/>`,
  ie: `<path d="M5 12.500h14a7 7 0 10-2.500 5.500" fill="none" stroke="#1c9ae8" stroke-width="3.600"/><ellipse cx="12" cy="12" rx="12" ry="5" fill="none" stroke="#f2c21c" stroke-width="1.300" transform="rotate(-40 12 12)"/>`,
  greenE: `<circle cx="12" cy="12" r="11" fill="#7ec82a"/><circle cx="12" cy="12" r="6.500" fill="#fff"/><path d="M6 12h12M8 8h8M8 16h8" stroke="#7ec82a" stroke-width="1.500"/>`
}
</script>

<style scoped>
.app {
  position: relative;
  width: 1366px;
  height: 768px;
  overflow: hidden;
  display: flex;
  flex-direction: column;
  background: #f0f0f0;
  color: #1a1a1a;
  font: 12px/16px "Noto Sans CJK SC", "Liberation Sans", sans-serif;
}
.titlebar {
  display: flex;
  align-items: center;
  height: 24px;
  flex: none;
  background: #fff;
  padding-left: 3px;
}
.logo { width: 16px; height: 16px; margin-right: 4px; }
.title-text { white-space: nowrap; }
.latin { font: 13px/16px "Open Sans", sans-serif; white-space: pre; }
.title-gap { margin-left: 19px; }
.winctl { margin-left: auto; display: flex; }
.winctl svg { width: 12px; height: 12px; margin-left: 34px; }
.winctl svg:last-child { margin-right: 19px; }

.menubar {
  display: flex;
  align-items: center;
  height: 28px;
  flex: none;
  padding-left: 7px;
}
.menu-item { margin-right: 10px; white-space: nowrap; }
.menu-item:nth-child(7), .menu-item:nth-child(11) { margin-right: 14px; }
.menu-label { white-space: nowrap; }
.icon { width: 16px; height: 16px; flex: none; display: block; }
.mi-new { margin-right: 4px; }
.mi-caret { margin-left: 0; }
.mi-gxe { margin-left: 8px; margin-right: 4px; }
.hint-tab {
  margin-left: 5px;
  width: 188px;
  height: 28px;
  background: #f5f5f5;
  border-radius: 3px 3px 0 0;
  text-align: center;
  line-height: 28px;
  color: #5a2a0a;
  white-space: nowrap;
}
.mi-user { margin-left: 9px; margin-right: 4px; }
.mi-bean { margin-left: 13px; }
.mi-bell { margin-left: 8px; }
.mi-more { margin-left: 39px; }

.toolrow {
  display: flex;
  align-items: center;
  height: 28px;
  flex: none;
  box-sizing: border-box;
}
.wr0 { height: 26px; }
.wr2 { height: 30px; padding-bottom: 2px; }
.toprow { height: 32px; align-items: flex-start; padding-top: 2px; }
.seg {
  display: flex;
  align-items: center;
  height: 24px;
  flex: none;
  background: #f6f6f6;
  border-radius: 3px;
  box-sizing: border-box;
}
.toprow .seg { height: 26px; }
.s-file { margin-left: 3px; width: 146px; padding-left: 1px; }
.s-file .tool { padding: 0 4px; }
.s-file .more { margin-left: 9px; }
.s-main { margin-left: 3px; width: 549px; padding-left: 2px; }
.s-main .more { margin-left: 38px; }
.s-view { margin-left: 2px; width: 663px; padding-left: 1px; }
.s-view .more { margin-left: 28px; }
.s-a { margin-left: 3px; width: 788px; }
.s-b { margin-left: 3px; width: 564px; }
.s-b .sep { margin: 0 2px 0 1px; }
.s-b2 { margin-left: 74px; width: 421px; padding-left: 2px; }
.s-c { margin-left: 3px; width: 1158px; }
.s-c .sel { margin-right: 0; }
.s-c .more { margin-left: 57px; }
.s-c2 { margin-left: 2px; width: 31px; padding-left: 1px; }
.s-snap1 { margin-left: 3px; width: 207px; }
.s-snap2 { margin-left: 4px; width: 260px; }

.tool {
  display: flex;
  align-items: center;
  gap: 3px;
  height: 22px;
  padding: 0 4px;
  white-space: nowrap;
  flex: none;
  box-sizing: border-box;
}
.tool.off { color: #a4a4a4; }
.tool.box {
  background: #e4eefa;
  border: 1px solid #1b7fd4;
  padding: 0 3px;
}
.tool.hot {
  background: #bcdcf6;
  border: 1px solid #1b7fd4;
  height: 24px;
  padding: 0 3px;
}
.caret {
  display: block;
  position: relative;
  flex: none;
  width: 12px;
  height: 16px;
  margin-left: -3px;
}
.caret::after {
  content: "";
  position: absolute;
  left: 4px;
  top: 7px;
  border: 3px solid transparent;
  border-top-color: #222;
  border-bottom: 0;
}
.caret.tiny { width: 8px; }
.caret.tiny::after { left: 1px; border-top-color: #888; }
.caret.solo { margin-left: 0; width: 13px; }
.sep {
  display: block;
  flex: none;
  width: 1px;
  height: 18px;
  margin: 0 2px 0 3px;
  background: #c4c4c4;
}
.grip {
  display: block;
  flex: none;
  width: 0;
  height: 14px;
  margin: 0 1px 0 2px;
  border-left: 2px dotted #a8a8a8;
}
.more {
  font: 700 13px/14px "Liberation Sans", sans-serif;
  flex: none;
}
.sel {
  display: flex;
  align-items: center;
  justify-content: space-between;
  flex: none;
  height: 22px;
  margin: 0 3px 0 1px;
  padding-left: 2px;
  background: #fff;
  white-space: nowrap;
  box-sizing: border-box;
}
.sel .caret { background: #f4f4f4; height: 22px; margin-left: 0; width: 13px; }
.sel .caret::after { top: 10px; }

.main { display: flex; flex: none; height: 622px; }
.nav {
  width: 165px;
  margin-right: 5px;
  flex: none;
  display: flex;
  flex-direction: column;
}
.nav-head {
  display: flex;
  align-items: center;
  height: 15px;
  flex: none;
  background: #0054dc;
  color: #fff;
  font-size: 14px;
  line-height: 15px;
}
.nav-head span { flex: 1; white-space: nowrap; }
.nav-head svg { width: 11px; height: 11px; margin-right: 6px; flex: none; }
.nav-btn {
  height: 22px;
  flex: none;
  margin: 1px 0 0 1px;
  box-sizing: border-box;
  background: #f0f0f0;
  border: 1px solid #d0d0d0;
  border-right-color: #8a8a8a;
  border-bottom-color: #8a8a8a;
  text-align: center;
  line-height: 22px;
}
.nav-btn.active { height: 21px; border-width: 1px 2px 2px 1px; background: #eee; line-height: 20px; }
.tree-tools {
  display: flex;
  align-items: center;
  gap: 6px;
  height: 26px;
  margin: 1px 0 0 1px;
  padding-left: 6px;
  flex: none;
  background: linear-gradient(#fafafa, #ececec);
}
.tree-tools svg { width: 17px; height: 16px; }
.tree {
  flex: none;
  height: 488px;
  margin-left: 2px;
  padding-top: 2px;
  box-sizing: border-box;
  border: 1px solid #8a8a8a;
  background: #fff;
  overflow: hidden;
  font-size: 12px;
}
.tree-row {
  position: relative;
  display: flex;
  align-items: center;
  height: 16px;
  white-space: nowrap;
}
.lv0 { padding-left: 8px; }
.lv1 { padding-left: 31px; }
.lv1::before, .lv1::after {
  content: "";
  position: absolute;
  top: 0;
  bottom: 0;
  border-left: 1px dotted #777;
}
.lv1::before { left: 12px; }
.lv1::after { left: 31px; }
.lv1.last::after { bottom: 8px; }
.chev { width: 8px; height: 8px; flex: none; }
.dots { display: block; flex: none; width: 10px; border-top: 1px dotted #777; }
.dots.short { width: 7px; margin-left: 0; }
.tree-label { margin-left: 5px; }
.lv1 .tree-label { margin-left: 6px; }
.code { font: 10px/16px "Liberation Mono", monospace; color: #1a1a1a; }
.leaf { display: flex; align-items: center; height: 16px; padding-right: 4px; }
.leaf.picked { background: #d8d8d8; }
.cad-icon { margin-left: 5px; width: 14px; height: 14px; }
.new-tag {
  margin: -10px 0 0 1px;
  padding: 0 1px;
  background: #ffe11a;
  font: 700 8px/8px "Liberation Sans", sans-serif;
}

.work { flex: 1; min-width: 0; display: flex; flex-direction: column; }
.canvas { display: block; width: 1196px; height: 480px; flex: none; background: #000; }
.ax {
  fill: #ccc;
  font: 700 13px "Liberation Sans", sans-serif;
  text-anchor: middle;
}
.dim { fill: #ccc; font: 15px "Liberation Sans", sans-serif; }
.dim.faint { fill: #9a9ab8; }

.snaprow .tool.box { gap: 2px; height: 23px; }
.coordrow { height: 30px; flex: none; padding-left: 456px; box-sizing: border-box; padding-top: 2px; }
.coord-seg { width: 410px; height: 25px; }
.coord-sel { width: 58px; height: 23px; }
.muted { color: #8a8a8a; white-space: nowrap; }
.x-label { margin-right: 5px; }
.y-label { margin-left: 6px; margin-right: 5px; }
.spin {
  display: flex;
  align-items: center;
  justify-content: flex-end;
  width: 56px;
  height: 22px;
  margin: 0 3px 0 0;
  border: 1px solid #a8a8a8;
  border-radius: 2px;
  color: #8a8a8a;
  box-sizing: border-box;
  background: #f2f2f2;
  flex: none;
}
.spin.wide { width: 68px; margin-left: 5px; }
.spin-btn { position: relative; display: block; width: 15px; height: 20px; margin-left: 3px; }
.spin-btn::before, .spin-btn::after {
  content: "";
  position: absolute;
  left: 4px;
  border: 3px solid transparent;
}
.spin-btn::before { top: 2px; border-bottom-color: #777; border-top: 0; }
.spin-btn::after { bottom: 2px; border-top-color: #777; border-bottom: 0; }
.check { display: block; width: 10px; height: 10px; border: 1px solid #888; margin-left: 1px; flex: none; }
.rot-label { margin-left: 8px; white-space: nowrap; }

.statusbar {
  display: flex;
  gap: 3px;
  height: 22px;
  flex: none;
  padding-top: 2px;
  box-sizing: border-box;
  align-items: flex-start;
}
.cell {
  height: 19px;
  padding-left: 2px;
  box-sizing: border-box;
  background: #fafafa;
  border: 1px solid #d8d8d8;
  font-size: 11px;
  line-height: 17px;
  font-family: "Liberation Mono", "Noto Sans CJK SC", monospace;
  white-space: nowrap;
  flex: none;
  overflow: hidden;
}
.c1 { width: 148px; font-size: 10px; }
.c2 { width: 76px; }
.c3 { width: 97px; }
.c4 { width: 47px; }
.c5 { width: 913px; font-family: "Noto Sans CJK SC", sans-serif; font-size: 12px; }
.c6 { flex: 1; width: auto; }

.taskbar {
  display: flex;
  align-items: center;
  height: 40px;
  flex: none;
  background: #0a161b;
  color: #ddd;
}
.start { width: 48px; height: 40px; display: flex; align-items: center; justify-content: center; flex: none; }
.start svg { width: 16px; height: 16px; }
.search {
  display: flex;
  align-items: center;
  width: 344px;
  height: 40px;
  flex: none;
  background: #3b3b3b;
  box-sizing: border-box;
  padding-left: 11px;
}
.cortana {
  display: block;
  width: 12px;
  height: 12px;
  border: 3px solid #fff;
  border-radius: 50%;
  flex: none;
}
.search-text { margin-left: 7px; font-size: 14px; color: #9a9a9a; white-space: nowrap; }
.mic { width: 16px; height: 16px; margin-left: auto; margin-right: 13px; flex: none; }
.task {
  position: relative;
  height: 40px;
  display: flex;
  align-items: center;
  justify-content: center;
  flex: none;
}
.task svg { width: 24px; height: 24px; }
.task.running::after {
  content: "";
  position: absolute;
  left: 2px;
  right: 2px;
  bottom: 0;
  height: 2px;
  background: #6aaee6;
}
.task.focus { background: #24343c; }
.tray { display: flex; align-items: center; flex: 1; height: 40px; }
.tray svg { flex: none; display: block; }
.tray > span { flex: none; }
.t-link { margin-left: 107px; }
.t-cpu { margin-left: 20px; width: 47px; display: flex; flex-direction: column; align-items: center; white-space: nowrap; font-size: 12px; line-height: 17px; }
.t-up { width: 14px; height: 8px; margin-left: 19px; }
.t-bat { width: 18px; height: 12px; margin-left: 9px; }
.t-wifi { width: 14px; height: 14px; margin-left: 8px; }
.t-snd { width: 14px; height: 14px; margin-left: 8px; }
.t-kbd { width: 24px; height: 14px; margin-left: 9px; }
.t-zh { margin-left: 10px; font-size: 13px; color: #fff; font-weight: 700; }
.t-s { width: 16px; height: 16px; margin-left: 14px; }
.t-clock { margin-left: 14px; width: 66px; display: flex; flex-direction: column; align-items: center; white-space: nowrap; font-size: 12px; line-height: 18px; flex: none; }
.t-note { width: 16px; height: 14px; margin-left: 16px; }

.badge {
  position: absolute;
  left: 474px;
  top: 0;
  width: 46px;
  height: 22px;
  color: #fff;
  font: 700 12px/14px "Liberation Sans", sans-serif;
  text-align: center;
}
.badge::before {
  content: "";
  position: absolute;
  left: 2px;
  top: -24px;
  width: 42px;
  height: 42px;
  border-radius: 50%;
  background: radial-gradient(circle at 50% 30%, #6ad048, #3aa83a);
  box-shadow: 0 2px 3px rgba(0, 0, 0, 0.45);
}
.badge span { position: relative; }
.sogou {
  position: absolute;
  left: 1005px;
  top: 4px;
  width: 202px;
  height: 24px;
  box-sizing: border-box;
  display: flex;
  align-items: center;
  gap: 6px;
  background: #f5f9fd;
  border: 1px solid #c5d6e6;
}
.sogou svg { width: 16px; height: 16px; flex: none; }
.sogou .sg-logo { width: 24px; height: 24px; margin: -1px 0 0 -2px; }
.sg-zh { color: #1e7ec8; font-weight: 700; font-size: 14px; margin-left: 2px; }
.sg-dot { color: #1e7ec8; font-weight: 700; font-size: 14px; width: 16px; text-align: center; }
</style>

<style>
html, body { margin: 0; padding: 0; overflow: hidden; background: #f0f0f0; }
</style>
